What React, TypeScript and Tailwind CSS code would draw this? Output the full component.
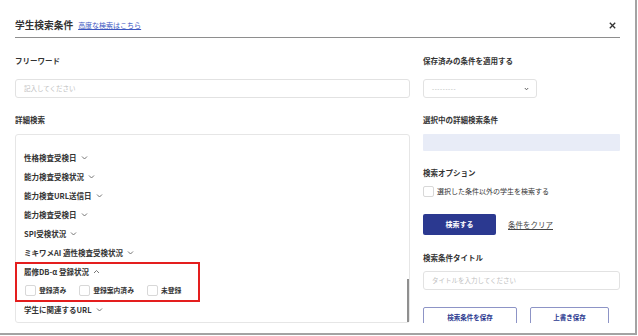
import React from 'react'

const Chevron = ({ up = false }: { up?: boolean }) => (
  <svg width="7" height="5" viewBox="0 0 7 5" className="ml-[4px] text-[#666]">
    <polyline
      points={up ? '1,4 3.5,1.5 6,4' : '1,1.5 3.5,4 6,1.5'}
      fill="none"
      stroke="currentColor"
      strokeWidth="0.9"
    />
  </svg>
)

const Box = () => (
  <span className="w-[11px] h-[11px] border border-[#d8d8d8] rounded-[2px] bg-white shrink-0" />
)

const detailItems = [
  '性格検査受検日',
  '能力検査受検状況',
  '能力検査URL送信日',
  '能力検査受検日',
  'SPI受検状況',
  'ミキワメAI 適性検査受検状況',
]

const Label = ({ children, className = '' }: { children: React.ReactNode; className?: string }) => (
  <div className={`text-[7.5px] leading-[10px] font-bold text-[#333] ${className}`}>{children}</div>
)

export default function App() {
  return (
    <div className="relative w-[637px] h-[335px] bg-white border-r-2 border-b-2 border-[#a3a3a3] overflow-hidden px-[15px] font-['Noto_Sans_CJK_JP','Noto_Sans',sans-serif] text-[#333]">
      {/* Header */}
      <div className="h-[38px] pt-[13px] border-b border-[#8e8e8e] flex items-center justify-between">
        <div className="flex items-center gap-[5px]">
          <span className="text-[9.7px] leading-[14px] font-bold text-[#333]">学生検索条件</span>
          <span className="text-[7px] leading-[10px] text-[#3d57c2] underline">高度な検索はこちら</span>
        </div>
        <button className="w-[16px] h-[16px] flex items-center justify-center text-[#333]">
          <svg width="7" height="7" viewBox="0 0 7 7">
            <path d="M0.8 0.8 L6.2 6.2 M6.2 0.8 L0.8 6.2" stroke="currentColor" strokeWidth="1.3" />
          </svg>
        </button>
      </div>

      {/* Body */}
      <div className="h-[285px] overflow-hidden flex gap-[13px]">
        {/* Left column */}
        <div className="w-[395px] shrink-0">
          <Label className="mt-[18px]">フリーワード</Label>
          <div className="mt-[13px] h-[19px] border border-[#e2e2e2] rounded-[3px] flex items-center pl-[8px] text-[6.5px] text-[#c0c0c0]">
            記入してください
          </div>
          <Label className="mt-[17px]">詳細検索</Label>
          <div className="relative mt-[9px] h-[189px] border border-[#e6e6e6] rounded-[3px] pt-[13px] pl-[8px]">
            {detailItems.map(item => (
              <div key={item} className="h-[19px] flex items-center text-[7.5px] font-bold text-[#333]">
                {item}
                <Chevron />
              </div>
            ))}
            <div className="h-[19px] flex items-center text-[7.5px] font-bold text-[#333]">
              履修DB-α 登録状況
              <Chevron up />
            </div>
            <div className="h-[19px] flex items-center gap-[13px] pl-[1px] text-[6.8px] font-bold text-[#333]">
              <div className="flex items-center gap-[3px]"><Box />登録済み</div>
              <div className="flex items-center gap-[3px]"><Box />登録案内済み</div>
              <div className="flex items-center gap-[3px]"><Box />未登録</div>
            </div>
            <div className="h-[19px] flex items-center text-[7.5px] font-bold text-[#333]">
              学生に関連するURL
              <Chevron />
            </div>
            {/* scrollbar */}
            <div className="absolute right-0 top-[144px] bottom-0 w-[2px] bg-[#8f8f8f]" />
          </div>
        </div>

        {/* Right column */}
        <div className="flex-1">
          <Label className="mt-[18px]">保存済みの条件を適用する</Label>
          <div className="mt-[13px] w-[114px] h-[19px] border border-[#e2e2e2] rounded-[3px] flex items-center justify-between pl-[8px] pr-[7px] text-[6px] text-[#a8a8a8]">
            <span className="tracking-[0.6px]">---------</span>
            <svg width="5" height="4" viewBox="0 0 5 4" className="text-[#555]">
              <polyline points="0.8,1 2.5,2.8 4.2,1" fill="none" stroke="currentColor" strokeWidth="0.9" />
            </svg>
          </div>
          <Label className="mt-[17px]">選択中の詳細検索条件</Label>
          <div className="mt-[9px] h-[17px] bg-[#e8ecf7] rounded-[1px]" />
          <Label className="mt-[17px]">検索オプション</Label>
          <div className="mt-[8px] flex items-center gap-[3px] text-[7px] leading-[11px] text-[#333]">
            <Box />
            選択した条件以外の学生を検索する
          </div>
          <div className="mt-[17px] flex items-center gap-[12px]">
            <button className="w-[73px] h-[21px] bg-[#2b3990] rounded-[2px] text-white text-[7px] font-bold">
              検索する
            </button>
            <span className="text-[7.5px] text-[#444] underline">条件をクリア</span>
          </div>
          <Label className="mt-[18px]">検索条件タイトル</Label>
          <div className="mt-[8px] h-[19px] border border-[#e2e2e2] rounded-[3px] flex items-center pl-[8px] text-[6.5px] text-[#c0c0c0]">
            タイトルを入力してください
          </div>
          <div className="mt-[17px] flex gap-[13px]">
            <button className="w-[94px] h-[22px] shrink-0 border border-[#8d94c6] rounded-[2px] text-[#2b3990] text-[6.5px] font-bold pt-[5px] flex justify-center">
              検索条件を保存
            </button>
            <button className="w-[79px] h-[22px] shrink-0 border border-[#8d94c6] rounded-[2px] text-[#2b3990] text-[6.5px] font-bold pt-[5px] flex justify-center">
              上書き保存
            </button>
          </div>
        </div>
      </div>

      {/* annotation highlight */}
      <div className="absolute left-[15px] top-[262px] w-[185px] h-[40px] border-2 border-[#e41e1e] pointer-events-none" />
    </div>
  )
}
